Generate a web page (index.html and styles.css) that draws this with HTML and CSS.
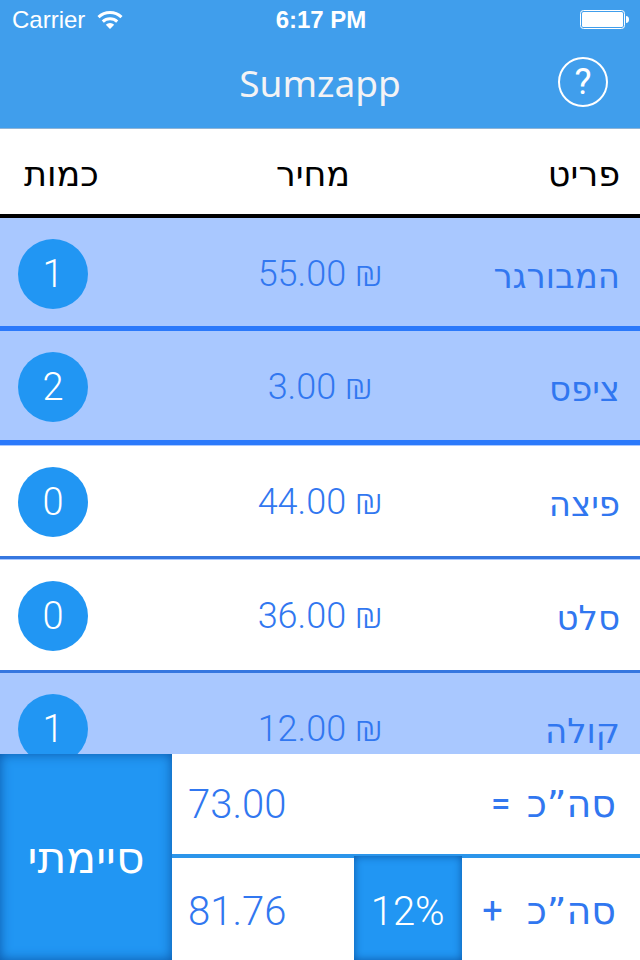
FILE: index.html
```html
<!DOCTYPE html>
<html lang="he" dir="rtl">
<head>
  <meta charset="UTF-8">
  <meta name="viewport" content="width=device-width, initial-scale=1.0">
  <title>Sumzapp</title>
  <link rel="stylesheet" href="styles.css">
</head>
<body>
  <div class="app">
    <header class="top" dir="ltr">
      <div class="status">
        <div class="carrier">
          <span>Carrier</span>
          <svg width="26" height="20" viewBox="0 0 26 20" aria-hidden="true">
            <g fill="none" stroke="#fff" stroke-width="3">
              <path d="M1.5 7.2a16.5 16.5 0 0 1 23 0"/>
              <path d="M5.8 11.6a10.4 10.4 0 0 1 14.4 0"/>
            </g>
            <path d="M13 19l-4.2-4.3a6 6 0 0 1 8.4 0z" fill="#fff"/>
          </svg>
        </div>
        <div class="time">6:17 PM</div>
        <svg class="battery" width="50" height="20" viewBox="0 0 50 20" aria-hidden="true">
          <rect x="0.5" y="0.5" width="44" height="18" rx="3" fill="none" stroke="#fff"/>
          <rect x="2" y="2" width="41" height="15" rx="1.5" fill="#fff"/>
          <path d="M46 6c2 0 3 1.500 3 3.500s-1 3.500-3 3.500z" fill="#fff"/>
        </svg>
      </div>
      <div class="nav">
        <h1>Sumzapp</h1>
        <button class="help" type="button">?</button>
      </div>
    </header>

    <main class="list">
      <table>
        <thead>
          <tr><th class="item">פריט</th><th class="price">מחיר</th><th class="qty">כמות</th></tr>
        </thead>
        <tbody>
          <tr class="selected">
            <td class="item">המבורגר</td>
            <td class="price" dir="ltr">55.00 ₪</td>
            <td class="qty"><button type="button">1</button></td>
          </tr>
          <tr class="selected">
            <td class="item">ציפס</td>
            <td class="price" dir="ltr">3.00 ₪</td>
            <td class="qty"><button type="button">2</button></td>
          </tr>
          <tr>
            <td class="item">פיצה</td>
            <td class="price" dir="ltr">44.00 ₪</td>
            <td class="qty"><button type="button">0</button></td>
          </tr>
          <tr>
            <td class="item">סלט</td>
            <td class="price" dir="ltr">36.00 ₪</td>
            <td class="qty"><button type="button">0</button></td>
          </tr>
          <tr class="selected">
            <td class="item">קולה</td>
            <td class="price" dir="ltr">12.00 ₪</td>
            <td class="qty"><button type="button">1</button></td>
          </tr>
        </tbody>
      </table>
    </main>

    <footer class="summary">
      <div class="totals">
        <div class="line">
          <span class="label">סה”כ</span>
          <span class="sign">=</span>
          <span class="sum">73.00</span>
        </div>
        <div class="line tip-line">
          <span class="label">סה”כ</span>
          <span class="sign">+</span>
          <button class="tip" type="button" dir="ltr">12%</button>
          <span class="sum">81.76</span>
        </div>
      </div>
      <button class="done" type="button">סיימתי</button>
    </footer>
  </div>
</body>
</html>
```
FILE: styles.css
```css
* {
  box-sizing: border-box;
}
body {
  margin: 0;
  background: #fff;
  font-family: Roboto, "DejaVu Sans", sans-serif;
  font-weight: 300;
  color: #3177f0;
}
button {
  border: none;
  padding: 0;
  background: #2196f3;
  color: #fff;
  font: inherit;
  cursor: pointer;
}
.app {
  display: flex;
  flex-direction: column;
  height: 100vh;
}

/* status bar and title */
.top {
  background: #409eec;
  border-bottom: 1px solid #8fb4d6;
  color: #fff;
}
.status {
  display: grid;
  grid-template-columns: 1fr auto 1fr;
  align-items: center;
  height: 40px;
  padding: 0 10px 0 12px;
  font: 24px "Liberation Sans", sans-serif;
}
.carrier {
  display: flex;
  align-items: center;
  gap: 12px;
}
.time {
  font-weight: bold;
}
.battery {
  justify-self: end;
}
.nav {
  display: grid;
  grid-template-columns: 1fr auto 1fr;
  align-items: center;
  height: 88px;
  padding: 0 32px 4px;
}
h1 {
  grid-column: 2;
  margin: 0;
  font: 400 37px "Noto Sans", sans-serif;
  color: #f3f3f5;
}
.help {
  justify-self: end;
  width: 50px;
  height: 50px;
  border: 2px solid #fff;
  border-radius: 50%;
  background: none;
  font-size: 36px;
  font-weight: 400;
  line-height: 46px;
}

/* menu items */
.list {
  flex: 1;
  min-height: 0;
  overflow-y: auto;
  scrollbar-width: none;
}
table {
  width: 100%;
  table-layout: fixed;
  border-collapse: separate;
  border-spacing: 0;
}
th {
  position: sticky;
  top: 0;
  height: 89px;
  padding: 4px 0 0;
  background: #fff;
  border-bottom: 4px solid #000;
  color: #000;
  font: 400 35px "DejaVu Sans", sans-serif;
}
td {
  height: 114px;
  padding: 2px 0 0;
  border-top: 1px solid #a9c8ff;
  border-bottom: 3px solid #3677e0;
  font-size: 36px;
}
.selected td {
  background: #a9c8ff;
  border-bottom: 5px solid #2b79fb;
}
tbody tr:first-child td {
  height: 113px;
}
.item {
  padding-right: 20px;
  text-align: right;
}
td.item {
  padding-top: 6px;
  font-family: "DejaVu Sans", sans-serif;
  font-size: 34px;
  font-weight: 400;
}
.price {
  text-align: center;
}
th.price {
  padding-right: 14px;
}
th.qty {
  padding-left: 24px;
  text-align: left;
}
td.qty {
  padding-left: 18px;
  text-align: left;
}
.qty button {
  display: block;
  margin-right: auto;
  width: 70px;
  height: 70px;
  border-radius: 50%;
  font-size: 38px;
}

/* totals */
.summary {
  display: flex;
  height: 206px;
}
.totals {
  flex: 1;
  display: flex;
  flex-direction: column;
  font-size: 40px;
}
.line {
  flex: 1;
  display: flex;
  align-items: center;
  padding: 0 24px 0 16px;
}
.line:first-child {
  flex: 0 0 104px;
  border-bottom: 4px solid #2b95ea;
}
.label {
  font-family: "DejaVu Sans", sans-serif;
  font-size: 38px;
  font-weight: 400;
}
.sign {
  width: 20px;
  margin-right: 16px;
  font-size: 36px;
  font-weight: 400;
  text-align: center;
}
.sum {
  margin-right: auto;
}
.tip-line {
  padding-top: 4px;
}
.tip-line .sign {
  margin-right: 24px;
}
.tip {
  align-self: stretch;
  width: 108px;
  margin-top: -6px;
  margin-right: 21px;
  padding-top: 6px;
  box-shadow: inset 0 0 8px #0b58a8;
}
.done {
  width: 172px;
  box-shadow: inset 0 0 12px #0b58a8;
  font: 400 44px "DejaVu Sans", sans-serif;
}
```
